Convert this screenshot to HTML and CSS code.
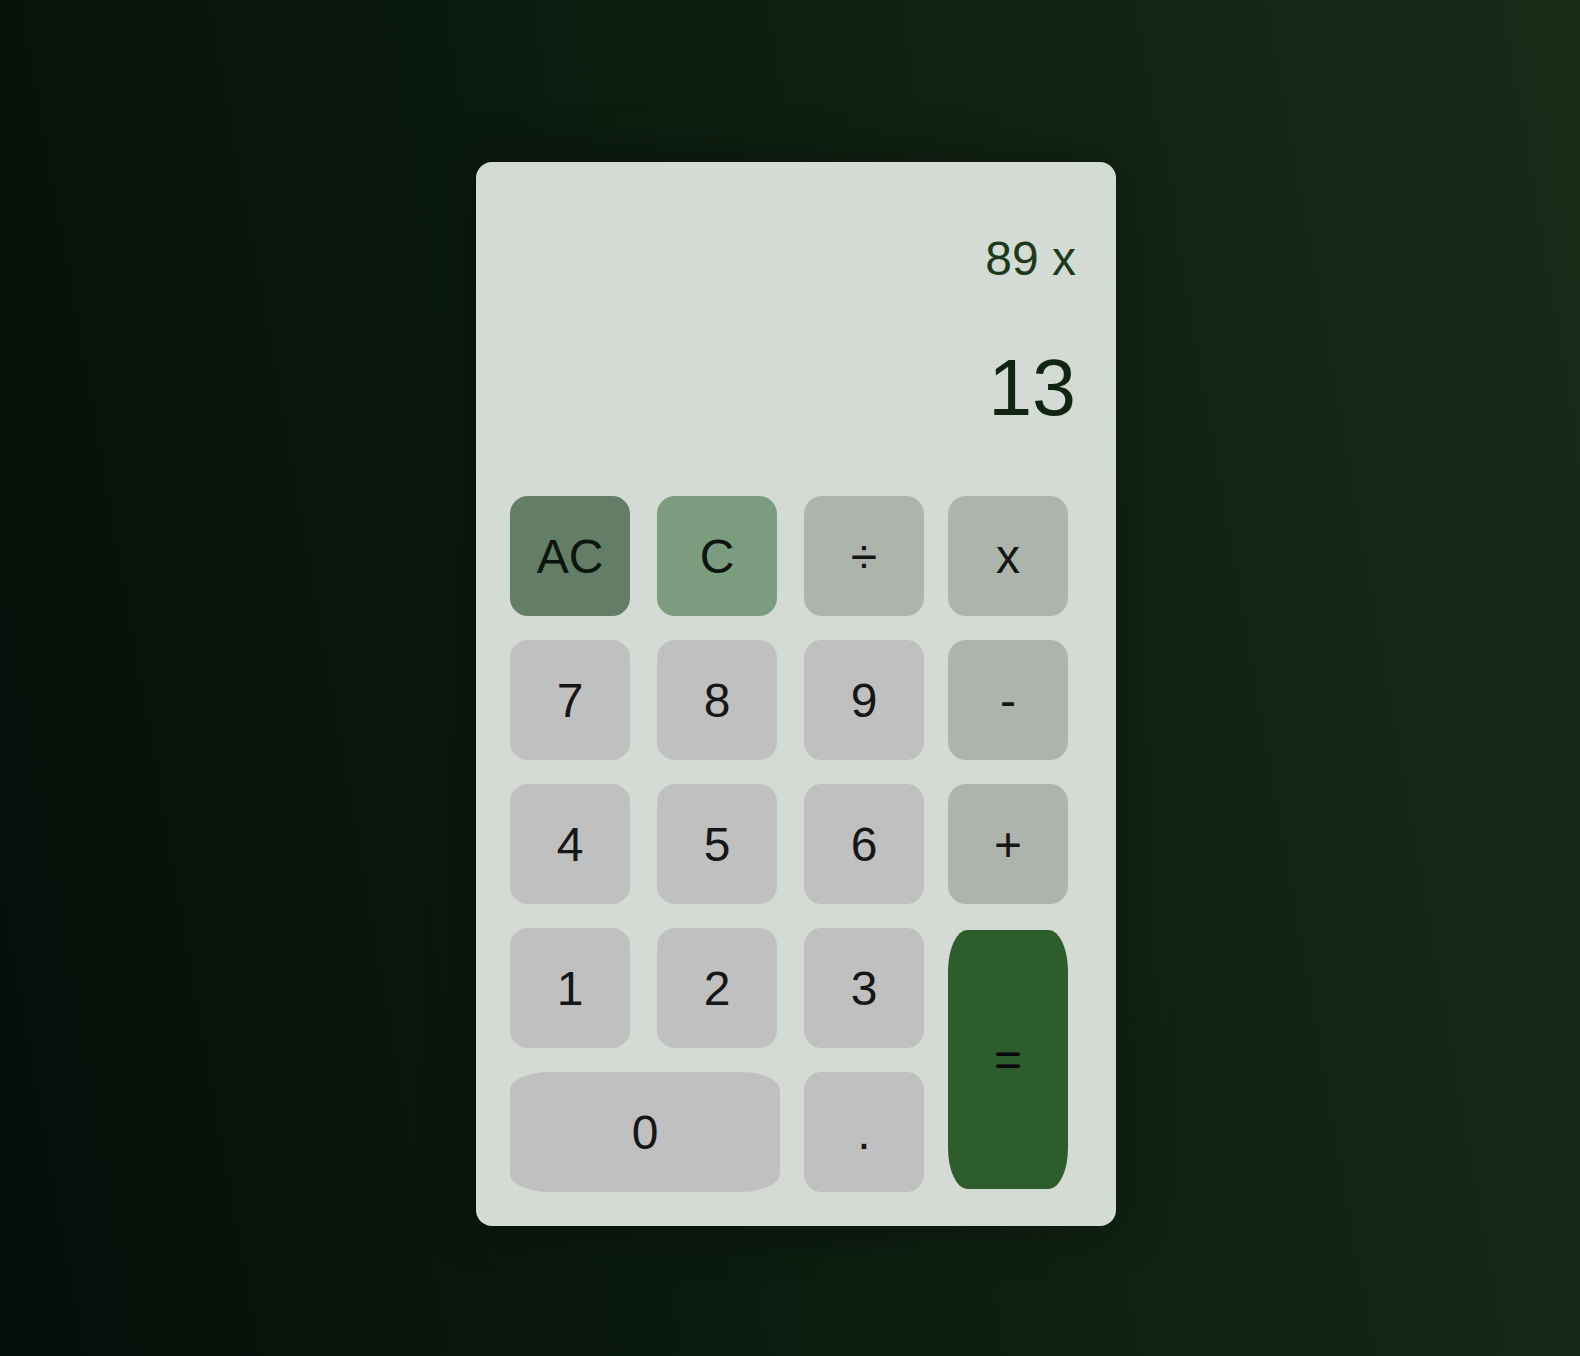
FILE: index.html
```html
<!DOCTYPE html>
<html lang="en">
<head>
<meta charset="utf-8">
<title>Calculator</title>
<link rel="stylesheet" href="styles.css">
</head>
<body>
<div class="calculator">
  <div class="display">
    <div class="previous">89 x</div>
    <div class="current">13</div>
  </div>
  <div class="keys">
    <button class="key clear-all">AC</button>
    <button class="key clear">C</button>
    <button class="key op">÷</button>
    <button class="key op">x</button>
    <button class="key">7</button>
    <button class="key">8</button>
    <button class="key">9</button>
    <button class="key op">-</button>
    <button class="key">4</button>
    <button class="key">5</button>
    <button class="key">6</button>
    <button class="key op">+</button>
    <button class="key">1</button>
    <button class="key">2</button>
    <button class="key">3</button>
    <button class="key equals">=</button>
    <button class="key zero">0</button>
    <button class="key">.</button>
  </div>
</div>
</body>
</html>
```
FILE: styles.css
```css
html, body {
  margin: 0;
  padding: 0;
}
body {
  width: 1580px;
  height: 1356px;
  overflow: hidden;
  background: linear-gradient(80deg, #040e09 0%, #0c1c0f 45%, #172d18 100%);
  font-family: "Liberation Sans", Arial, sans-serif;
  display: flex;
  justify-content: center;
  align-items: flex-start;
  padding-top: 162px;
  box-sizing: border-box;
}
.calculator {
  width: 640px;
  box-sizing: border-box;
  margin-left: 12px;
  padding: 69px 40px 34px 34px;
  background: #d3dbd4;
  border-radius: 16px;
  box-shadow: 0 0 50px rgba(0, 0, 0, 0.35);
}
.display {
  text-align: right;
}
.previous {
  font-size: 48px;
  line-height: 55px;
  color: #1d3a1d;
}
.current {
  margin-top: 55px;
  font-size: 79px;
  line-height: 94px;
  color: #112411;
}
.keys {
  margin-top: 61px;
  display: grid;
  grid-template-columns: 147px 147px 144px 120px;
  grid-template-rows: repeat(5, 120px);
  row-gap: 24px;
}
.key {
  width: 120px;
  height: 120px;
  border: none;
  padding: 0;
  margin: 0;
  border-radius: 15%;
  background: #c0c0c0;
  color: #161616;
  font-family: "Liberation Sans", Arial, sans-serif;
  font-size: 48px;
  display: flex;
  align-items: center;
  justify-content: center;
}
.op {
  background: #acb4ac;
}
.clear-all {
  background: #637d66;
  color: #0e150e;
}
.clear {
  background: #7c9c7f;
  color: #0e150e;
}
.equals {
  grid-column: 4;
  grid-row: 4 / span 2;
  height: 259px;
  margin-top: 2px;
  border-radius: 16%;
  background: #2c5d2a;
  color: #080808;
}
.zero {
  grid-column: 1 / span 2;
  width: 270px;
}
```
